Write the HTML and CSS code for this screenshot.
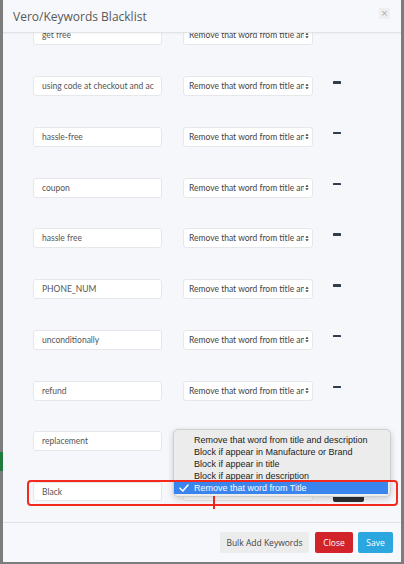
FILE: index.html
```html
<!DOCTYPE html>
<html>
<head>
<meta charset="utf-8">
<link rel="stylesheet" href="styles.css">
</head>
<body>
<div class="bg-tab"></div>
<div class="modal">
  <div class="modal-header">
    <span class="modal-title">Vero/Keywords Blacklist</span>
    <span class="modal-close">×</span>
  </div>
  <div class="modal-body">
    <div class="list">
      <div class="row"><div class="kw">get free</div><div class="sel"><span class="sel-text">Remove that word from title an</span><svg class="arr" viewBox="0 0 6 10"><path d="M3 1 L5.5 4 H0.5Z M3 9 L5.5 6 H0.5Z" fill="#333"/></svg></div><div class="minus"></div></div>
      <div class="row"><div class="kw">using code at checkout and ac</div><div class="sel"><span class="sel-text">Remove that word from title an</span><svg class="arr" viewBox="0 0 6 10"><path d="M3 1 L5.5 4 H0.5Z M3 9 L5.5 6 H0.5Z" fill="#333"/></svg></div><div class="minus"></div></div>
      <div class="row"><div class="kw">hassle-free</div><div class="sel"><span class="sel-text">Remove that word from title an</span><svg class="arr" viewBox="0 0 6 10"><path d="M3 1 L5.5 4 H0.5Z M3 9 L5.5 6 H0.5Z" fill="#333"/></svg></div><div class="minus"></div></div>
      <div class="row"><div class="kw">coupon</div><div class="sel"><span class="sel-text">Remove that word from title an</span><svg class="arr" viewBox="0 0 6 10"><path d="M3 1 L5.5 4 H0.5Z M3 9 L5.5 6 H0.5Z" fill="#333"/></svg></div><div class="minus"></div></div>
      <div class="row"><div class="kw">hassle free</div><div class="sel"><span class="sel-text">Remove that word from title an</span><svg class="arr" viewBox="0 0 6 10"><path d="M3 1 L5.5 4 H0.5Z M3 9 L5.5 6 H0.5Z" fill="#333"/></svg></div><div class="minus"></div></div>
      <div class="row"><div class="kw">PHONE_NUM</div><div class="sel"><span class="sel-text">Remove that word from title an</span><svg class="arr" viewBox="0 0 6 10"><path d="M3 1 L5.5 4 H0.5Z M3 9 L5.5 6 H0.5Z" fill="#333"/></svg></div><div class="minus"></div></div>
      <div class="row"><div class="kw">unconditionally</div><div class="sel"><span class="sel-text">Remove that word from title an</span><svg class="arr" viewBox="0 0 6 10"><path d="M3 1 L5.5 4 H0.5Z M3 9 L5.5 6 H0.5Z" fill="#333"/></svg></div><div class="minus"></div></div>
      <div class="row"><div class="kw">refund</div><div class="sel"><span class="sel-text">Remove that word from title an</span><svg class="arr" viewBox="0 0 6 10"><path d="M3 1 L5.5 4 H0.5Z M3 9 L5.5 6 H0.5Z" fill="#333"/></svg></div><div class="minus"></div></div>
      <div class="row"><div class="kw">replacement</div><div class="sel"><span class="sel-text">Remove that word from title an</span><svg class="arr" viewBox="0 0 6 10"><path d="M3 1 L5.5 4 H0.5Z M3 9 L5.5 6 H0.5Z" fill="#333"/></svg></div><div class="minus"></div></div>
      <div class="row last">
        <div class="kw">Black</div>
        <div class="sel"><span class="sel-text">Remove that word from Title</span></div>
        <div class="add"></div>
        <div class="popup">
          <div class="opt">Remove that word from title and description</div>
          <div class="opt">Block if appear in Manufacture or Brand</div>
          <div class="opt">Block if appear in title</div>
          <div class="opt">Block if appear in description</div>
          <div class="opt on"><svg class="check" viewBox="0 0 10 8"><path d="M1 4.2 L3.8 7 L9 1" fill="none" stroke="#fff" stroke-width="1.6" stroke-linecap="round" stroke-linejoin="round"/></svg>Remove that word from Title</div>
        </div>
        <div class="mark"></div>
        <div class="mark-line"></div>
      </div>
    </div>
  </div>
  <div class="modal-footer">
    <button class="btn btn-bulk">Bulk Add Keywords</button>
    <button class="btn btn-close">Close</button>
    <button class="btn btn-save">Save</button>
  </div>
</div>
</body>
</html>
```
FILE: styles.css
```css
html, body {
  margin: 0;
  padding: 0;
}
body {
  width: 404px;
  height: 564px;
  background: #7c7c7c;
  position: relative;
  overflow: hidden;
  padding-left: 3px;
  box-sizing: border-box;
}
.bg-tab {
  position: absolute;
  left: 0;
  top: 452px;
  width: 3px;
  height: 19px;
  background: #1f7a3e;
}
.modal {
  width: 398px;
  height: 562px;
  background: #f6f7fb;
  display: flex;
  flex-direction: column;
  position: relative;
}
.modal-header {
  height: 33px;
  box-sizing: border-box;
  border-bottom: 1px solid #e2e3e7;
  box-shadow: 0 1px 2px rgba(0,0,0,0.04);
  background: #f7f8fb;
  display: flex;
  align-items: center;
  justify-content: space-between;
  padding: 0 10px 0 10px;
  position: relative;
  z-index: 2;
  flex-shrink: 0;
}
.modal-title {
  font-family: "Open Sans", sans-serif;
  font-size: 12px;
  color: #585858;
}
.modal-close {
  width: 11px;
  height: 11px;
  background: #eeeff1;
  color: #aaa;
  font-family: "DejaVu Sans", sans-serif;
  font-size: 9px;
  line-height: 11px;
  text-align: center;
  margin-top: -5px;
  margin-right: 1px;
}
.modal-body {
  flex: 1;
  overflow: hidden;
  position: relative;
}
.list {
  margin-top: -7.75px;
  padding-left: 30px;
}
.row {
  display: flex;
  align-items: flex-start;
  height: 20px;
  margin-bottom: 30.75px;
  position: relative;
}
.row.last {
  height: 19px;
}
.kw {
  width: 129px;
  height: 100%;
  box-sizing: border-box;
  background: #fff;
  border: 1px solid #e6e7eb;
  border-radius: 3px;
  padding-left: 8px;
  padding-right: 2px;
  font-family: "Lato", sans-serif;
  font-size: 8.5px;
  line-height: 18px;
  color: #555;
  white-space: nowrap;
  overflow: hidden;
}
.sel {
  width: 130px;
  height: 100%;
  margin-left: 21px;
  box-sizing: border-box;
  background: #fff;
  border: 1px solid #e6e7eb;
  border-radius: 3px;
  padding-left: 5px;
  padding-right: 3px;
  display: flex;
  align-items: center;
  font-family: "Lato", sans-serif;
  font-size: 8.5px;
  color: #444;
  white-space: nowrap;
  overflow: hidden;
}
.sel-text {
  flex: 1;
  min-width: 0;
  overflow: hidden;
}
.arr {
  width: 4px;
  height: 7px;
  flex-shrink: 0;
  margin-left: 1px;
}
.minus {
  width: 8px;
  height: 2.5px;
  margin-left: 20px;
  margin-top: 5px;
  background: #2f3e4e;
  border-radius: 0.5px;
}
.add {
  width: 31px;
  height: 20px;
  margin-left: 20px;
  background: #2b2f35;
  border-radius: 2px;
}
.popup {
  position: absolute;
  left: 140px;
  top: -53px;
  width: 218px;
  height: 68px;
  box-sizing: border-box;
  background: #ececec;
  border: 1px solid #cfcfcf;
  border-radius: 5px;
  box-shadow: 0 2px 6px rgba(0,0,0,0.18);
  padding-top: 4px;
  font-family: "Liberation Sans", sans-serif;
  font-size: 9px;
  color: #222;
  z-index: 3;
}
.opt {
  height: 12px;
  line-height: 12px;
  padding-left: 20px;
  white-space: nowrap;
  position: relative;
}
.opt.on {
  background: #3a84ee;
  color: #fff;
  margin-right: 2px;
}
.check {
  position: absolute;
  left: 5px;
  top: 2px;
  width: 10px;
  height: 8px;
}
.mark {
  position: absolute;
  left: -6px;
  top: -2px;
  width: 371px;
  height: 26px;
  box-sizing: border-box;
  border: 2px solid #f2291c;
  border-radius: 4px;
  z-index: 4;
}
.mark-line {
  position: absolute;
  left: 180px;
  top: 14px;
  width: 2px;
  height: 13px;
  background: #e8271c;
  z-index: 4;
}
.modal-footer {
  height: 40px;
  flex-shrink: 0;
  box-sizing: border-box;
  border-top: 1px solid #e0e1e5;
  background: #f7f8fb;
  display: flex;
  justify-content: flex-end;
  align-items: flex-start;
  padding-top: 9px;
  padding-right: 8px;
  gap: 5px;
}
.btn {
  height: 21px;
  border: none;
  border-radius: 2px;
  font-family: "Open Sans", sans-serif;
  font-size: 8.5px;
  padding: 0;
  cursor: pointer;
}
.btn-bulk {
  width: 89px;
  background: #ececed;
  color: #444;
  margin-right: 1px;
}
.btn-close {
  width: 38px;
  background: #d2222a;
  color: #fff;
}
.btn-save {
  width: 35px;
  background: #2ca6df;
  color: #fff;
}
```
